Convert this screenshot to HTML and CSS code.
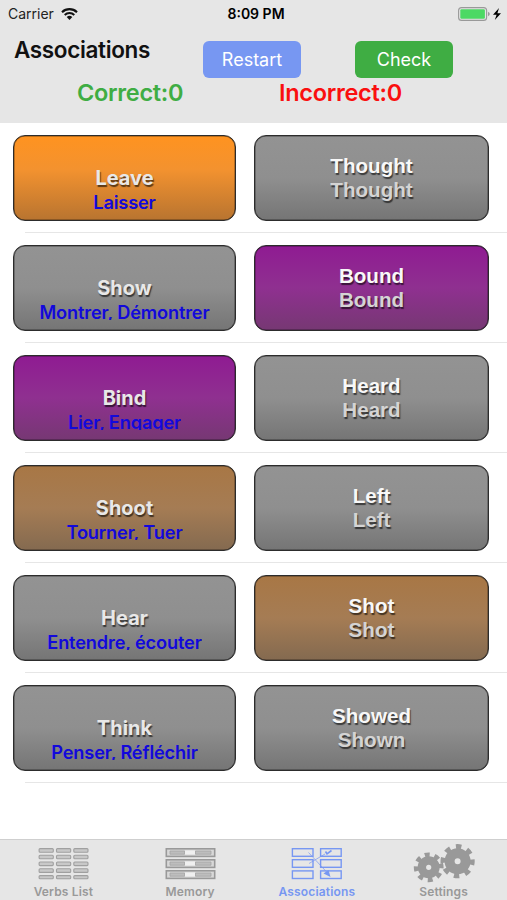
FILE: index.html
```html
<!DOCTYPE html>
<html lang="en">
<head>
    <meta charset="UTF-8">
    <meta name="viewport" content="width=device-width, initial-scale=1.0">
    <title>Associations</title>
    <link rel="stylesheet" href="styles.css">
</head>
<body>
    <div class="app">
        <header class="header">
            <div class="status-bar">
                <div class="carrier">
                    <span>Carrier</span>
                    <svg width="17" height="12" viewBox="0 0 17 12">
                        <path d="M1 4.2A10.8 10.8 0 0 1 16 4.2" fill="none" stroke="#111" stroke-width="2.1"/>
                        <path d="M3.7 7A7 7 0 0 1 13.3 7" fill="none" stroke="#111" stroke-width="2"/>
                        <path d="M8.5 12L5.7 9.1A4 4 0 0 1 11.3 9.1Z" fill="#111"/>
                    </svg>
                </div>
                <div class="clock">8:09 PM</div>
                <div class="battery">
                    <svg width="44" height="14" viewBox="0 0 44 14">
                        <rect x="0.6" y="0.6" width="28" height="12.8" rx="3" fill="none" stroke="#999" stroke-width="1.1"/>
                        <rect x="2.3" y="2.3" width="24.6" height="9.4" rx="1.2" fill="#4cd964"/>
                        <path d="M30 4.8Q31.8 5.5 31.8 7Q31.8 8.5 30 9.2Z" fill="#999"/>
                        <path d="M41 1L35 7.7H38.6L36.8 13L43 6.2H39.4Z" fill="#000"/>
                    </svg>
                </div>
            </div>
            <div class="title-row">
                <h1>Associations</h1>
                <button class="btn restart">Restart</button>
                <button class="btn check">Check</button>
            </div>
            <div class="score-row">
                <span class="correct">Correct:0</span>
                <span class="incorrect">Incorrect:0</span>
            </div>
        </header>

        <main class="pairs">
            <div class="pair">
                <div class="card verb orange"><b>Leave</b><span>Laisser</span></div>
                <div class="card forms"><b>Thought</b><span>Thought</span></div>
            </div>
            <div class="pair">
                <div class="card verb"><b>Show</b><span>Montrer, Démontrer</span></div>
                <div class="card forms purple"><b>Bound</b><span>Bound</span></div>
            </div>
            <div class="pair">
                <div class="card verb purple"><b>Bind</b><span>Lier, Engager</span></div>
                <div class="card forms"><b>Heard</b><span>Heard</span></div>
            </div>
            <div class="pair">
                <div class="card verb brown"><b>Shoot</b><span>Tourner, Tuer</span></div>
                <div class="card forms"><b>Left</b><span>Left</span></div>
            </div>
            <div class="pair">
                <div class="card verb"><b>Hear</b><span>Entendre, écouter</span></div>
                <div class="card forms brown"><b>Shot</b><span>Shot</span></div>
            </div>
            <div class="pair">
                <div class="card verb"><b>Think</b><span>Penser, Réfléchir</span></div>
                <div class="card forms"><b>Showed</b><span>Shown</span></div>
            </div>
        </main>

        <nav class="tab-bar">
            <div class="tab">
                <svg width="64" height="44" viewBox="0 0 64 44">
                    <g fill="#c8c8c8" stroke="#a0a0a0" stroke-width="1.1">
                        <rect x="8.1" y="8.6" width="14.2" height="3.6" rx="1"/>
                        <rect x="25.5" y="8.6" width="14.2" height="3.6" rx="1"/>
                        <rect x="42.8" y="8.6" width="14.2" height="3.6" rx="1"/>
                        <rect x="8.1" y="15.2" width="14.2" height="3.6" rx="1"/>
                        <rect x="25.5" y="15.2" width="14.2" height="3.6" rx="1"/>
                        <rect x="42.8" y="15.2" width="14.2" height="3.6" rx="1"/>
                        <rect x="8.1" y="22" width="14.2" height="3.6" rx="1"/>
                        <rect x="25.5" y="22" width="14.2" height="3.6" rx="1"/>
                        <rect x="42.8" y="22" width="14.2" height="3.6" rx="1"/>
                        <rect x="8.1" y="28.8" width="14.2" height="3.6" rx="1"/>
                        <rect x="25.5" y="28.8" width="14.2" height="3.6" rx="1"/>
                        <rect x="42.8" y="28.8" width="14.2" height="3.6" rx="1"/>
                        <rect x="8.1" y="35.6" width="14.2" height="3.2" rx="1"/>
                        <rect x="25.5" y="35.6" width="14.2" height="3.2" rx="1"/>
                        <rect x="42.8" y="35.6" width="14.2" height="3.2" rx="1"/>
                    </g>
                </svg>
                <span>Verbs List</span>
            </div>
            <div class="tab">
                <svg width="64" height="44" viewBox="0 0 64 44">
                    <g fill="#d8d8d8" stroke="#999" stroke-width="1.6">
                        <rect x="8.3" y="8.8" width="48.4" height="7.6"/>
                        <rect x="8.3" y="19.8" width="48.4" height="7.6"/>
                        <rect x="8.3" y="30.8" width="48.4" height="7.6"/>
                    </g>
                    <g fill="#bdbdbd" stroke="#a4a4a4" stroke-width="0.8">
                        <path d="M12 11H26.5V14.2H12ZM37.5 11H53V14.2H37.5Z"/>
                        <path d="M12 22H26.5V25.2H12ZM37.5 22H53V25.2H37.5Z"/>
                        <path d="M12 33H26.5V36.2H12ZM37.5 33H53V36.2H37.5Z"/>
                    </g>
                    <path d="M27 10.6H37V14.6H27ZM27 21.6H37V25.6H27ZM27 32.6H37V36.6H27Z" fill="#f0f0f0"/>
                </svg>
                <span>Memory</span>
            </div>
            <div class="tab active">
                <svg width="64" height="44" viewBox="0 0 64 44">
                    <g fill="none" stroke="#7797f2" stroke-width="1.4">
                        <rect x="7.4" y="8.7" width="20.6" height="7.6"/>
                        <rect x="35.6" y="8.7" width="20.6" height="7.6"/>
                        <rect x="7.4" y="19.7" width="20.6" height="7.6"/>
                        <rect x="35.6" y="19.7" width="20.6" height="7.6"/>
                        <rect x="7.4" y="30.9" width="20.6" height="7.6"/>
                        <rect x="35.6" y="30.9" width="20.6" height="7.6"/>
                        <path d="M23.5 12.5L43.5 34M24 23.5L40 14" stroke-width="0.7"/>
                    </g>
                    <path d="M45.5 37L38.5 33.5L43.5 30Z" fill="#7797f2"/>
                    <path d="M40.5 11.5L42 13.8L46.5 10.5" fill="none" stroke="#7797f2" stroke-width="1.6"/>
                </svg>
                <span>Associations</span>
            </div>
            <div class="tab">
                <svg width="64" height="44" viewBox="0 0 64 44">
                    <g fill="none" stroke="#999">
                        <circle cx="16.7" cy="27.3" r="6.8" stroke-width="8.4"/>
                        <circle cx="16.7" cy="27.3" r="12.6" stroke-width="4.6" pathLength="80" stroke-dasharray="5 5" stroke-dashoffset="4"/>
                        <circle cx="45.6" cy="21.2" r="8" stroke-width="10"/>
                        <circle cx="45.6" cy="21.2" r="14.6" stroke-width="5" pathLength="80" stroke-dasharray="4.8 5.2" stroke-dashoffset="1.5"/>
                    </g>
                </svg>
                <span>Settings</span>
            </div>
        </nav>
    </div>
</body>
</html>
```
FILE: styles.css
```css
* {
    box-sizing: border-box;
}
body {
    margin: 0;
    background: #fff;
    font-family: Inter, 'Liberation Sans', sans-serif;
}
.app {
    display: flex;
    flex-direction: column;
    width: 507px;
    height: 900px;
    overflow: hidden;
}
.header {
    height: 123px;
    background: #e6e6e6;
    flex-shrink: 0;
}
.status-bar {
    display: grid;
    grid-template-columns: 1fr auto 1fr;
    align-items: center;
    height: 27px;
    padding: 0 5px 0 8px;
    font-size: 14px;
    color: #222;
}
.carrier {
    display: flex;
    align-items: center;
    gap: 7px;
}
.clock {
    padding-left: 2px;
    font-size: 14px;
    font-weight: 600;
    color: #000;
}
.battery {
    display: flex;
    justify-content: flex-end;
}
.title-row {
    display: flex;
    align-items: flex-start;
    height: 51px;
    padding: 14px 54px 0 14px;
}
.title-row h1 {
    width: 189px;
    margin: -5px 0 0;
    font-size: 22.5px;
    line-height: 28px;
    font-weight: 600;
    letter-spacing: -0.35px;
    color: #111;
}
.btn {
    width: 98px;
    height: 37px;
    padding: 0;
    border: 0;
    border-radius: 6px;
    font-family: inherit;
    font-size: 18px;
    color: #fff;
}
.restart {
    background: #7797f2;
}
.check {
    margin-left: auto;
    background: #3fad43;
}
.score-row {
    display: flex;
    padding-left: 77px;
    font-size: 23.5px;
    line-height: 30px;
    font-weight: 600;
    letter-spacing: -0.3px;
}
.correct {
    width: 202px;
    color: #3fad43;
}
.incorrect {
    color: #fa0f0f;
}
.pairs {
    flex: 1;
}
.pair {
    display: flex;
    gap: 18px;
    height: 110px;
    padding: 12px 18px 0 13px;
    background: linear-gradient(#e6e6e6, #e6e6e6) 25px 109px / 482px 1px no-repeat;
}
.card {
    display: flex;
    flex-direction: column;
    align-items: center;
    height: 86px;
    border: 1px solid #2c2c2c;
    border-radius: 12px;
    background: linear-gradient(#939393, #8f8f8f 50%, #757575);
    box-shadow: inset 0 0 0 0.5px rgba(0, 0, 0, 0.5);
    font-size: 20px;
    line-height: 24px;
    white-space: nowrap;
}
.card b {
    text-shadow: 1px 1.5px 1px rgba(0, 0, 0, 0.6);
}
.verb {
    width: 223px;
    padding-top: 30px;
}
.verb b {
    font-weight: 650;
    color: #e8e8e8;
}
.verb span {
    height: 20px;
    overflow: hidden;
    font-size: 18.2px;
    line-height: 25px;
    font-weight: 600;
    letter-spacing: -0.15px;
    color: #1208dc;
}
.forms {
    width: 235px;
    padding-top: 18px;
    font-family: 'Liberation Sans', Arial, sans-serif;
    font-size: 20.6px;
    font-weight: 700;
}
.forms b {
    color: #f8f8f8;
}
.forms span {
    color: #d4d4d4;
    text-shadow: 1px 1.5px 1px rgba(0, 0, 0, 0.6);
}
.orange {
    background: linear-gradient(#ff9320, #f3922f 40%, #b87430);
}
.purple {
    background: linear-gradient(#8f1b92, #8f3090 50%, #763873);
}
.brown {
    background: linear-gradient(#a87745, #a57c54 50%, #846a50);
}
.tab-bar {
    display: grid;
    grid-template-columns: repeat(4, 1fr);
    height: 61px;
    flex-shrink: 0;
    border-top: 1px solid #cfcfcf;
    background: #e6e6e6;
}
.tab {
    display: flex;
    flex-direction: column;
    align-items: center;
    font-size: 12px;
    line-height: 16px;
    font-weight: 600;
    letter-spacing: 0.15px;
    color: #999;
}
.tab svg {
    flex-shrink: 0;
}
.tab.active {
    color: #7797f2;
}
```
